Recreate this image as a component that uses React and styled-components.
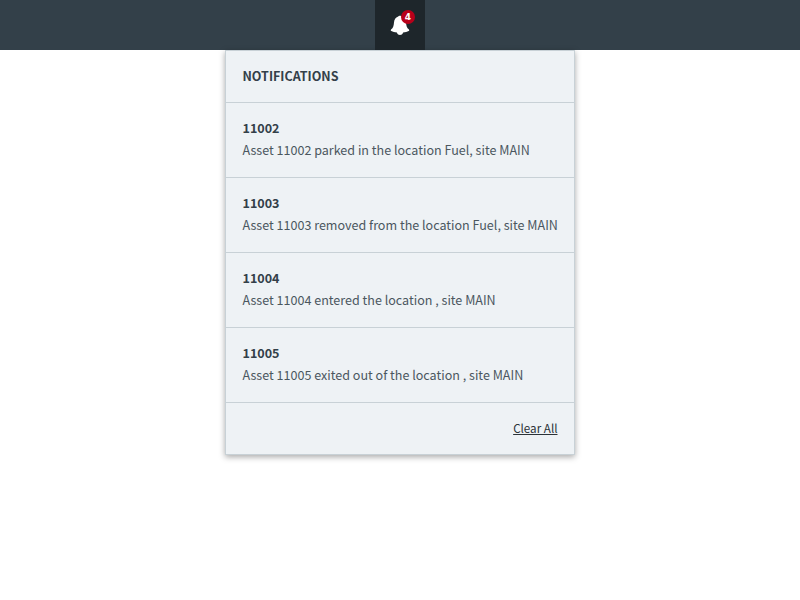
import React from "react";
import styled, { createGlobalStyle } from "styled-components";

const Global = createGlobalStyle`
  * { box-sizing: border-box; }
  body { margin: 0; background: #fff; font-family: "Noto Sans CJK SC", "Noto Sans", sans-serif; }
`;
const Page = styled.main`
  min-height: 100vh;
`;
const Toolbar = styled.header`
  height: 50px;
  background: #334049;
  display: flex;
  justify-content: center;
`;
const BellButton = styled.button`
  position: relative;
  width: 50px;
  height: 50px;
  padding: 0;
  border: 0;
  background: #1e262b;
  display: flex;
  align-items: center;
  justify-content: center;
`;
const Badge = styled.span`
  position: absolute;
  top: 10px;
  left: 26px;
  width: 14px;
  height: 14px;
  border-radius: 50%;
  background: #b8001a;
  color: #fff;
  font: 700 9px/14px "DejaVu Sans", sans-serif;
  text-align: center;
`;
const Panel = styled.section`
  width: 350px;
  margin: 0 auto;
  background: #eef2f5;
  border: 1px solid #c8d1d6;
  box-shadow: 0 2px 6px rgba(0, 0, 0, 0.34);
`;
const Title = styled.h2`
  margin: 0;
  height: 51px;
  padding: 0 16.5px;
  font-size: 12.5px;
  line-height: 50px;
  color: #334049;
`;
const Item = styled.article`
  height: 75px;
  padding: 14px 16.5px;
  border-top: 1px solid #c8d1d6;
  color: #334049;
  font-size: 12.55px;
  line-height: 22px;
  white-space: nowrap;
`;
const Code = styled.div`
  font-weight: 700;
`;
const Message = styled.div`
  color: #4b575f;
`;
const Footer = styled.footer`
  height: 52px;
  padding: 0 16.5px 2px;
  border-top: 1px solid #c8d1d6;
  display: flex;
  align-items: center;
  justify-content: flex-end;
`;
const Clear = styled.a`
  color: #2b3338;
  font-size: 11.65px;
  line-height: 18px;
  text-decoration: underline;
`;
const items = [
  ["11002", "Asset 11002 parked in the location Fuel, site MAIN"],
  ["11003", "Asset 11003 removed from the location Fuel, site MAIN"],
  ["11004", "Asset 11004 entered the location , site MAIN"],
  ["11005", "Asset 11005 exited out of the location , site MAIN"],
];
export default function App() {
  return (
    <Page>
      <Global />
      <Toolbar>
        <BellButton aria-label="Notifications">
          <svg width="20" height="20" viewBox="0 0 20 20" fill="#fff">
            <path d="M8.2 1.4C8.600.4 11.400.4 11.800 1.400 14.600 2.300 15.800 4.500 16 7.400c.2 3.500 1 5.400 2.700 6.800.7.700.7 1.500 0 1.900-1.500.9-3.600 1.300-5.600 1.500C12.500 19.400 11.400 20 10 20s-2.500-.6-3.100-2.400c-2-.2-4.100-.6-5.600-1.500-.7-.4-.7-1.200 0-1.900C3 12.800 3.800 10.900 4 7.400 4.200 4.500 5.400 2.300 8.200 1.400z" />
          </svg>
          <Badge>4</Badge>
        </BellButton>
      </Toolbar>
      <Panel>
        <Title>NOTIFICATIONS</Title>
        {items.map(([id, text]) => (
          <Item key={id}>
            <Code>{id}</Code>
            <Message>{text}</Message>
          </Item>
        ))}
        <Footer><Clear href="#">Clear All</Clear></Footer>
      </Panel>
    </Page>
  );
}
